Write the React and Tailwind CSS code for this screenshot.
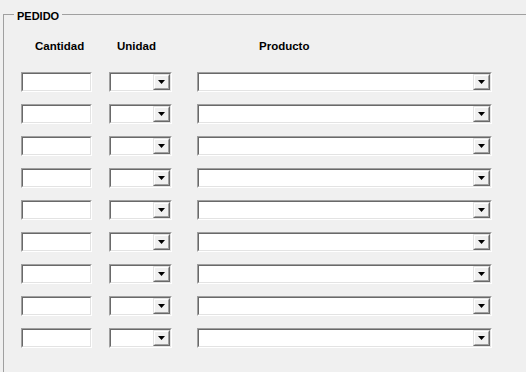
const ROWS = 9;

function Sunken({ className = '', children }) {
  // classic Win32 3D inset border: two px on each side
  return (
    <div className={`border border-t-[#a0a0a0] border-l-[#a0a0a0] border-b-white border-r-white ${className}`}>
      <div className="h-full border border-t-[#696969] border-l-[#696969] border-b-[#e3e3e3] border-r-[#e3e3e3] bg-white flex justify-end">
        {children}
      </div>
    </div>
  );
}

function DropButton() {
  return (
    <div className="w-[17px] h-full border border-t-[#e3e3e3] border-l-[#e3e3e3] border-b-[#696969] border-r-[#696969]">
      <div className="h-full border border-t-white border-l-white border-b-[#a0a0a0] border-r-[#a0a0a0] bg-[#f0f0f0] flex items-center justify-center">
        <svg width="7" height="4" viewBox="0 0 7 4">
          <polygon points="0,0 7,0 3.5,4" fill="#000" />
        </svg>
      </div>
    </div>
  );
}

export default function App() {
  return (
    <div
      className="w-[526px] h-[372px] bg-[#f0f0f0] overflow-hidden text-black"
      style={{ fontFamily: '"Liberation Sans", Arial, sans-serif' }}
    >
      <div className="relative mt-[14px] ml-[3px] h-[400px] border-l border-t border-[#a0a0a0]">
        <span className="absolute -top-[5px] left-[10px] px-[3px] bg-[#f0f0f0] text-[11px] leading-[13px] font-bold">
          PEDIDO
        </span>

        <div className="flex mt-[25px] pl-[31px] text-[11.5px] leading-[13px] font-bold">
          <span className="w-[82px]">Cantidad</span>
          <span className="w-[142px]">Unidad</span>
          <span>Producto</span>
        </div>

        <div className="flex flex-col gap-[12px] mt-[19px] pl-[17px]">
          {Array.from({ length: ROWS }).map((_, i) => (
            <div key={i} className="flex h-[20px]">
              <Sunken className="w-[71px] h-[20px]" />
              <Sunken className="w-[63px] h-[20px] ml-[17px]">
                <DropButton />
              </Sunken>
              <Sunken className="w-[295px] h-[20px] ml-[25px]">
                <DropButton />
              </Sunken>
            </div>
          ))}
        </div>
      </div>
    </div>
  );
}
